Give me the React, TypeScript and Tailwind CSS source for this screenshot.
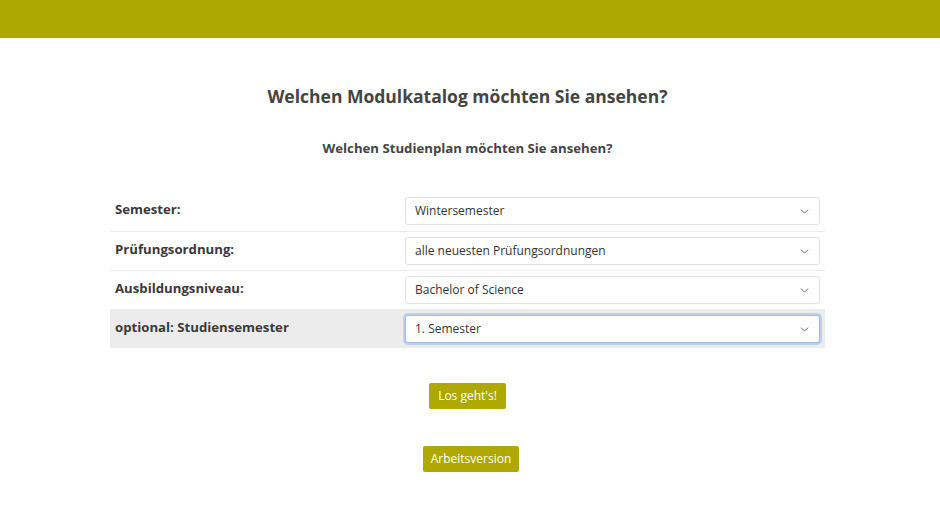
import { ChevronDown } from 'lucide-react';

const ROWS = [
  { label: 'Semester:', value: 'Wintersemester' },
  { label: 'Prüfungsordnung:', value: 'alle neuesten Prüfungsordnungen' },
  { label: 'Ausbildungsniveau:', value: 'Bachelor of Science' },
  { label: 'optional: Studiensemester', value: '1. Semester', active: true },
];

function FakeSelect({ value, active }: { value: string; active?: boolean }) {
  return (
    <div
      className={`flex h-[28px] w-[415px] items-center justify-between rounded-[3px] border bg-white pl-[9px] pr-[8px] text-[12px] text-[#333] ${
        active
          ? 'border-[#9dbdf0] shadow-[0_0_0_2px_rgba(140,180,240,0.5)]'
          : 'border-[#e2e2e2]'
      }`}
    >
      <span>{value}</span>
      <ChevronDown size={13} strokeWidth={1.6} className="text-[#555]" />
    </div>
  );
}

export default function App() {
  return (
    <div className="min-h-[529px] bg-white" style={{ fontFamily: '"Open Sans", "Noto Sans", sans-serif' }}>
      {/* Header bar */}
      <div className="h-[38px] w-full bg-[#aea800]" />

      <main className="w-[935px] pt-[44px]">
        <h1 className="text-center text-[17.5px] font-bold leading-[28px] text-[#444]">
          Welchen Modulkatalog möchten Sie ansehen?
        </h1>
        <h2 className="mt-[27px] text-center text-[13.2px] font-bold leading-[22px] text-[#444]">
          Welchen Studienplan möchten Sie ansehen?
        </h2>

        <div className="mx-auto mt-[33px] w-[715px]">
          {ROWS.map((row, i) => (
            <div
              key={row.label}
              className={`flex h-[39px] items-start py-[5px] ${i > 0 ? 'border-t border-[#ececec]' : ''} ${
                row.active ? 'bg-[#ececec]' : ''
              }`}
            >
              <div className="w-[295px] pl-[5px] pt-[1px] text-[13.2px] font-bold leading-[22px] text-[#3a3a3a]">
                {row.label}
              </div>
              <FakeSelect value={row.value} active={row.active} />
            </div>
          ))}
        </div>

        <div className="mt-[35px] flex flex-col items-center">
          <button
            type="button"
            className="h-[26px] rounded-[2px] bg-[#aea800] px-[9px] text-[12px] text-white"
          >
            Los geht's!
          </button>
          <button
            type="button"
            className="ml-[7px] mt-[37px] h-[26px] rounded-[2px] bg-[#aea800] px-[8px] text-[12px] text-white"
          >
            Arbeitsversion
          </button>
        </div>
      </main>
    </div>
  );
}
